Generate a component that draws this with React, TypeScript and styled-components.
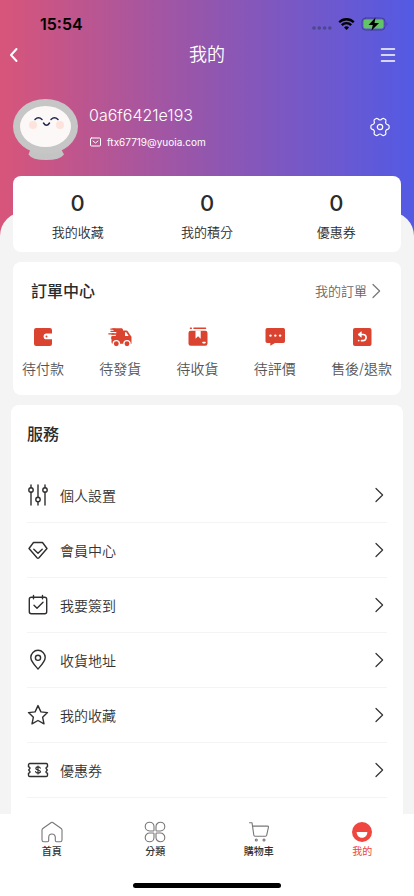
import React from "react";
import styled, { createGlobalStyle } from "styled-components";

const GlobalStyle = createGlobalStyle`
  * { box-sizing: border-box; }
  body {
    margin: 0;
    font-family: Inter, "Noto Sans CJK TC", sans-serif;
    color: #2b2b2b;
    background: #f4f4f4;
  }
  button { font: inherit; color: inherit; }
`;

const Page = styled.div`
  display: flex;
  flex-direction: column;
  height: 100vh;
`;

const Main = styled.main`
  flex: 1;
  min-height: 0;
  overflow-y: auto;
  scrollbar-width: none;
`;

const Hero = styled.header`
  padding: 8px 13px 75px;
  color: #fff;
  background: linear-gradient(90deg, #d8557a 0%, #9356ae 50%, #535ae4 100%);
`;

const StatusBar = styled.div`
  display: flex;
  align-items: center;
  justify-content: space-between;
  height: 32px;
  padding: 0 13px 0 27px;
  color: #000;
`;

const Clock = styled.time`
  font-size: 16px;
  font-weight: 600;
`;

const StatusIcons = styled.div`
  display: flex;
  align-items: center;
  gap: 6px;
`;

const IconButton = styled.button`
  display: flex;
  padding: 0;
  border: 0;
  background: none;
  cursor: pointer;
`;

const TitleBar = styled.div`
  display: grid;
  grid-template-columns: 1fr auto 1fr;
  align-items: center;
  height: 30px;
  padding-right: 5px;

  & > :first-child { justify-self: start; margin-left: -5px; }
  & > :last-child { justify-self: end; }
`;

const PageTitle = styled.h1`
  margin: 0;
  padding-left: 5px;
  font-size: 18px;
  font-weight: 350;
  line-height: 30px;
`;

const Profile = styled.section`
  display: flex;
  align-items: flex-start;
  padding: 29px 11px 0 0;
`;

const Identity = styled.div`
  flex: 1;
  display: flex;
  flex-direction: column;
  gap: 8px;
  padding: 5px 0 0 11px;
`;

const UserName = styled.div`
  font-size: 16px;
  font-weight: 300;
  line-height: 22px;
`;

const Email = styled.div`
  display: flex;
  align-items: center;
  gap: 6px;
  font-size: 10px;
  line-height: 16px;
`;

const Settings = styled(IconButton)`
  padding-top: 18px;
`;

const Sheet = styled.div`
  display: flex;
  flex-direction: column;
  margin-top: -24px;
  padding: 0 11px;
  border-radius: 24px 24px 0 0;
  background: #f4f4f4;
`;

const Card = styled.section`
  margin: 0 2px 10px;
  border-radius: 8px;
  background: #fff;
`;

const Stats = styled(Card)`
  display: grid;
  grid-template-columns: repeat(3, 1fr);
  margin-top: -36px;
  padding: 14px 0 10px;
`;

const Stat = styled.a`
  display: flex;
  flex-direction: column;
  align-items: center;
  gap: 6px;
  color: inherit;
  text-decoration: none;
`;

const StatValue = styled.span`
  font-size: 22px;
  font-weight: 500;
  line-height: 26px;
`;

const StatLabel = styled.span`
  font-size: 13px;
  font-weight: 350;
  line-height: 20px;
`;

const SectionTitle = styled.h2`
  margin: 0;
  font-size: 16px;
  font-weight: 500;
  line-height: 24px;
`;

const Orders = styled(Card)`
  padding: 17px 9px 16px;
`;

const OrdersHead = styled.div`
  display: flex;
  align-items: center;
  justify-content: space-between;
  padding: 0 11px 0 9px;
`;

const MoreLink = styled.a`
  display: flex;
  align-items: center;
  gap: 5px;
  font-size: 13px;
  font-weight: 350;
  line-height: 20px;
  color: #666;
  text-decoration: none;
`;

const OrderList = styled.div`
  display: flex;
  justify-content: space-between;
  padding-top: 22px;
`;

const OrderItem = styled.a`
  display: flex;
  flex-direction: column;
  align-items: center;
  gap: 10px;
  font-size: 14px;
  font-weight: 350;
  line-height: 20px;
  color: #555;
  text-decoration: none;
`;

const Services = styled(Card)`
  margin: 0;
  padding: 17px 16px 24px;
`;

const ServiceList = styled.nav`
  padding-top: 22px;
`;

const ServiceRow = styled.a`
  display: flex;
  align-items: center;
  gap: 11px;
  height: 55px;
  padding: 0 3px 0 0;
  border-bottom: 1px solid #f4f4f4;
  font-size: 14px;
  font-weight: 350;
  color: #333;
  text-decoration: none;

  & > span { flex: 1; }
`;

const TabBar = styled.footer`
  background: #fff;
`;

const Tabs = styled.nav`
  display: grid;
  grid-template-columns: repeat(4, 1fr);
  padding: 7px 0 24px;
`;

const Tab = styled.a<{ $active?: boolean }>`
  display: flex;
  flex-direction: column;
  align-items: center;
  gap: 1px;
  font-size: 10px;
  font-weight: ${(p) => (p.$active ? 400 : 500)};
  line-height: 15px;
  color: ${(p) => (p.$active ? "#f0433d" : "#333")};
  text-decoration: none;
`;

const HomeIndicator = styled.div`
  width: 148px;
  height: 5px;
  margin: 0 auto 8px;
  border-radius: 3px;
  background: #000;
`;

type IconProps = { w: number; h?: number; color?: string; sw?: number; children: React.ReactNode };

const Icon = ({ w, h = w, color = "currentColor", sw = 1.4, children }: IconProps) => (
  <svg width={w} height={h} viewBox={`0 0 ${w} ${h}`} fill="none" stroke={color} strokeWidth={sw}
    strokeLinecap="round" strokeLinejoin="round" aria-hidden="true">
    {children}
  </svg>
);

const Chevron = ({ color }: { color: string }) => (
  <Icon w={9} h={16} color={color} sw={1.2}><path d="M1 1.5 7.6 8 1 14.5" /></Icon>
);

const Avatar = () => (
  <Icon w={65} h={62}>
    <g stroke="none">
      <path d="M19 46h27l5 9.500q-4 5.500-18 5.500t-17.500-5.500z" fill="#c4c4c4" />
      <ellipse cx="32.5" cy="27.5" rx="32.5" ry="27.5" fill="#c6c6c6" />
      <ellipse cx="32.5" cy="27.5" rx="25.5" ry="20.5" fill="#fcf8f7" />
      <circle cx="20" cy="26" r="4" fill="#fde3dc" />
      <circle cx="47" cy="26" r="4" fill="#fde3dc" />
    </g>
    <path d="M22 20.5q3.5-3.500 7 0M38 20.5q3.5-3.500 7 0M30.5 24q3 4.500 6 0" stroke="#23244d" strokeWidth="1.5" />
  </Icon>
);

const RED = "#d9432f";

const orders = [
  { label: "待付款", icon: (
    <Icon w={24} color="none">
      <rect x="3" y="3" width="18" height="18" rx="2.2" fill={RED} />
      <path d="M21.5 8.500H15.500a2.900 2.900 0 0 0 0 5.800h6z" fill="#fff" />
      <circle cx="15.5" cy="11.4" r="1" fill={RED} />
    </Icon>) },
  { label: "待發貨", icon: (
    <Icon w={24} color="none">
      <path d="M4 3.300h9.600a1.500 1.500 0 0 1 1.400 1.400v.9h3.200a2 2 0 0 1 1.700.9l2.400 3.800c.9.600 1.200 1.200 1.200 2.200v6.200H5a1.500 1.500 0 0 1-1.500-1.500V11h4.300V9.700H3.500V8.300h4.800V6.800H6.500z" fill={RED} />
      <path d="M2.800 4.100h4M.8 8.800h5M3 6.400h5M3.500 13h3" stroke={RED} strokeWidth="1.3" />
      <path d="M17 7.300h1.300l2.300 3.700H17z" fill="#fff" />
      <circle cx="8.3" cy="18.7" r="3.1" fill={RED} stroke="#fff" strokeWidth="1.3" />
      <circle cx="19" cy="18.7" r="3.1" fill={RED} stroke="#fff" strokeWidth="1.3" />
    </Icon>) },
  { label: "待收貨", icon: (
    <Icon w={24} color="none">
      <rect x="2.5" y="5.8" width="19" height="15" rx="2.2" fill={RED} />
      <path d="M4.500 3.300h.8M8 3.300h11.500" stroke={RED} strokeWidth="1.6" />
      <path d="M9.500 5.500h5.200v8.300l-2.600-2.500-2.600 2.500z" fill="#fff" />
      <path d="M17 17.600h2" stroke="#fff" strokeWidth="1.6" />
    </Icon>) },
  { label: "待評價", icon: (
    <Icon w={24} color="none">
      <path d="M4.300 3h16a1.800 1.800 0 0 1 1.700 1.800v11.500a1.800 1.800 0 0 1-1.700 1.800H12L7.300 20.800v-2.700h-3a1.800 1.800 0 0 1-1.800-1.800V4.800A1.800 1.800 0 0 1 4.300 3z" fill={RED} />
      <circle cx="7.5" cy="10.600" r="1.200" fill="#fff" /><circle cx="12.300" cy="10.600" r="1.200" fill="#fff" /><circle cx="17.100" cy="10.600" r="1.200" fill="#fff" />
    </Icon>) },
  { label: "售後/退款", icon: (
    <Icon w={24} color="none">
      <rect x="3" y="3" width="18.500" height="18" rx="2" fill={RED} />
      <path d="M9.500 9.500H13a3.100 3.100 0 0 1 0 6.200h-1.500" stroke="#fff" strokeWidth="1.700" />
      <path d="M11 7 8 9.500l3 2.500z" fill="#fff" stroke="#fff" strokeWidth=".8" />
      <circle cx="8.700" cy="15.600" r=".9" fill="#fff" />
    </Icon>) },
];

const services = [
  { label: "個人設置", icon: <><path d="M4 1v2.500M4 8v13M11 1v12.500M11 18v3M18 1v2.500M18 8v13" /><circle cx="4" cy="6" r="2.200" /><circle cx="11" cy="15.500" r="2.200" /><circle cx="18" cy="6" r="2.200" /></> },
  { label: "會員中心", icon: <><path d="M6.500 3.500h9L20 9.500 12 18.800q-1 .9-2 0L2 9.500z" /><path d="m6.800 10.200 4.200 4 4.200-4" /></> },
  { label: "我要簽到", icon: <><rect x="2.300" y="3.300" width="17.400" height="16.400" rx="2" /><path d="M6.500 1.500v3.200M15.500 1.500v3.200M7 11.200l3 3 6-6" /></> },
  { label: "收貨地址", icon: <><path d="M11 20C8 16.500 3.800 12.500 3.800 8.500a7.200 7.200 0 0 1 14.400 0C18.200 12.500 14 16.500 11 20z" /><circle cx="11" cy="8.800" r="2.600" /></> },
  { label: "我的收藏", icon: <path d="m11 1.600 2.900 6.300 6.600.7-4.900 4.600 1.400 6.600-6-3.300-6 3.300 1.400-6.600L1.500 8.600l6.600-.7z" /> },
  { label: "優惠券", icon: <><path d="M2.800 4.500h16.400a1.300 1.300 0 0 1 1.300 1.300v2l-1 .4q-1 .8 0 1.700l.5.500q.5.600 0 1.200l-.5.500q-1 .9 0 1.700l1 .4v2a1.300 1.300 0 0 1-1.300 1.300H2.800a1.300 1.300 0 0 1-1.300-1.300v-2l1-.4q1-.8 0-1.700l-.5-.5q-.5-.6 0-1.200l.5-.5q1-.9 0-1.700l-1-.4v-2a1.300 1.300 0 0 1 1.300-1.300z" /><path d="M13.300 9.200c-.4-1.700-4.500-1.700-4.500.2 0 2 4.600 1.200 4.600 3.200 0 1.900-4.300 1.900-4.800 0M11 7v8" strokeWidth="1.200" /></> },
];

export default function App() {
  return (
    <Page>
      <GlobalStyle />
      <Main>
        <Hero>
          <StatusBar>
            <Clock>15:54</Clock>
            <StatusIcons>
              <Icon w={20} h={12} color="none">
                <g fill="#4b4790"><circle cx="2" cy="10" r="1.800" /><circle cx="7.300" cy="10" r="1.800" /><circle cx="12.600" cy="10" r="1.800" /><circle cx="17.900" cy="10" r="1.800" /></g>
              </Icon>
              <Icon w={17} h={12} color="#000" sw={2.300}>
                <path d="M1.200 4.300a10.300 10.300 0 0 1 14.600 0M3.800 7.100a6.600 6.600 0 0 1 9.400 0" strokeLinecap="butt" />
                <path d="M8.500 12 6 9.500a3.600 3.600 0 0 1 5 0z" fill="#000" stroke="none" />
              </Icon>
              <Icon w={27} h={14} sw={1}>
                <rect x="1" y="1" width="23" height="12" rx="3.500" stroke="#443f96" />
                <rect x="2.500" y="2.500" width="20" height="9" rx="2" fill="#62c466" stroke="none" />
                <path d="M25.500 5.200v3.600q2-1.800 0-3.600z" fill="#443f96" stroke="none" />
                <path d="M14.500.5 7.500 8h4.300l-1.300 5.500L18 6h-4.500z" fill="#000" stroke="none" />
              </Icon>
            </StatusIcons>
          </StatusBar>
          <TitleBar>
            <IconButton aria-label="返回"><Icon w={12} h={16} sw={2}><path d="M8.500 2 3 8l5.500 6" /></Icon></IconButton>
            <PageTitle>我的</PageTitle>
            <IconButton aria-label="選單"><Icon w={16} sw={1.500}><path d="M1.500 2h13M1.500 8h13M1.500 14h13" /></Icon></IconButton>
          </TitleBar>
          <Profile>
            <Avatar />
            <Identity>
              <UserName>0a6f6421e193</UserName>
              <Email>
                <Icon w={12} sw={1}><rect x="1.500" y="2" width="10" height="8" rx="1" /><path d="m4 5 2.500 2L9 5" /></Icon>
                ftx67719@yuoia.com
              </Email>
            </Identity>
            <Settings aria-label="設置">
              <Icon w={20} sw={1.200}>
                <path d="M5.800 1.700q.9-.6 1.900 0Q8.700 3 10 3t2.300-1.300q1-.6 1.900 0l1 .6q.9.500.7 1.600-.7 1.500 0 2.600t2.200 1.400q1 .3 1 1.300v1.600q0 1-1 1.300-1.500.3-2.200 1.400t0 2.600q.2 1.100-.7 1.600l-1 .6q-.9.600-1.900 0Q11.300 17 10 17t-2.300 1.300q-1 .6-1.900 0l-1-.6q-.9-.5-.7-1.600.7-1.500 0-2.600t-2.200-1.400q-1-.3-1-1.300V9.200q0-1 1-1.300 1.500-.3 2.200-1.400t0-2.600q-.2-1.100.7-1.600z" />
                <circle cx="10" cy="10" r="2.700" />
              </Icon>
            </Settings>
          </Profile>
        </Hero>
        <Sheet>
          <Stats>
            {["我的收藏", "我的積分", "優惠券"].map((label) => (
              <Stat href="#" key={label}><StatValue>0</StatValue><StatLabel>{label}</StatLabel></Stat>
            ))}
          </Stats>
          <Orders>
            <OrdersHead>
              <SectionTitle>訂單中心</SectionTitle>
              <MoreLink href="#">我的訂單<Chevron color="#777" /></MoreLink>
            </OrdersHead>
            <OrderList>
              {orders.map((o) => <OrderItem href="#" key={o.label}>{o.icon}{o.label}</OrderItem>)}
            </OrderList>
          </Orders>
          <Services>
            <SectionTitle>服務</SectionTitle>
            <ServiceList>
              {services.map((s) => (
                <ServiceRow href="#" key={s.label}>
                  <Icon w={22} color="#2f2f2f">{s.icon}</Icon>
                  <span>{s.label}</span>
                  <Chevron color="#333" />
                </ServiceRow>
              ))}
            </ServiceList>
          </Services>
        </Sheet>
      </Main>
      <TabBar>
        <Tabs>
          <Tab href="#">
            <Icon w={22} color="#777" sw={1.100}><path d="M10.300 1.500q.7-.5 1.400 0l8.500 6q.8.600.8 1.600V19q0 1.800-1.800 1.800h-3.700q-1.200 0-1.200-1.200v-3.300a3.300 3.300 0 0 0-6.600 0v3.300q0 1.200-1.200 1.200H2.800Q1 20.800 1 19V9.100q0-1 .8-1.600z" /></Icon>
            首頁
          </Tab>
          <Tab href="#">
            <Icon w={22} color="#777" sw={1.100}><path d="M10 9.200V5.600A4.400 4.400 0 1 0 5.600 10h3.600q.8 0 .8-.8zM12 9.200V5.600a4.400 4.400 0 1 1 4.400 4.400h-3.600q-.8 0-.8-.8zM10 12.800v3.600A4.400 4.400 0 1 1 5.600 12h3.600q.8 0 .8.800zM12 12.800v3.600a4.400 4.400 0 1 0 4.400-4.400h-3.600q-.8 0-.8.800z" /></Icon>
            分類
          </Tab>
          <Tab href="#">
            <Icon w={22} color="#777" sw={1.100}><path d="M1.500 1.700H4L5.800 14q.1 1.200 1.200 1.200h10.500q1 0 1.200-1L20.500 6q0-.9-1-.9H4.500" /><circle cx="8.300" cy="19" r="1" /><circle cx="16" cy="19" r="1" /></Icon>
            購物車
          </Tab>
          <Tab href="#" $active aria-current="page">
            <Icon w={22} color="none"><circle cx="11" cy="11" r="10" fill="#ef4640" /><path d="M6.200 11h9.600q.5 0 .5.600c-.4 7-10.200 7-10.600 0q0-.6.500-.6z" fill="#fff" /></Icon>
            我的
          </Tab>
        </Tabs>
        <HomeIndicator />
      </TabBar>
    </Page>
  );
}
